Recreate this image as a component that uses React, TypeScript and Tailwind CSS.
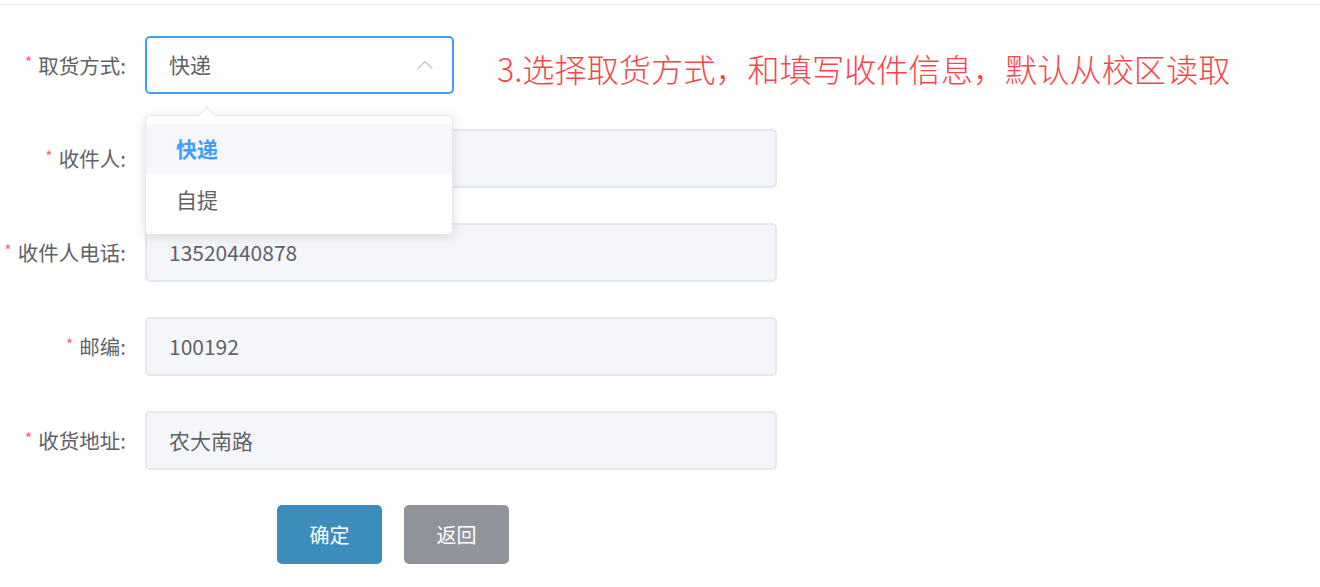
import { ChevronUp } from "lucide-react";

interface Field {
  label: string;
  value: string;
}

const fields: Field[] = [
  { label: "收件人", value: "" },
  { label: "收件人电话", value: "13520440878" },
  { label: "邮编", value: "100192" },
  { label: "收货地址", value: "农大南路" },
];

const font = { fontFamily: '"Noto Sans CJK SC", "Noto Sans", sans-serif' };

function Label({ text }: { text: string }) {
  return (
    <div className="w-[145px] shrink-0 pr-[19px] flex items-center justify-end text-[20.5px] text-[#606266] whitespace-nowrap">
      <span className="text-[#f56c6c] text-[16px] mr-[6px] -mt-[6px]">*</span>
      {text}:
    </div>
  );
}

export default function App() {
  return (
    <div className="w-[1320px] h-[587px] bg-white overflow-hidden" style={font}>
      <div className="h-[4px]" />
      <div className="border-t border-[#e6e8ef]" />

      <div className="pt-[31px]">
        {/* 取货方式 */}
        <div className="flex items-center h-[58px]">
          <Label text="取货方式" />
          <div className="relative">
            <div className="w-[309px] h-[58px] border-2 border-[#409eff] rounded-[5px] flex items-center justify-between pl-[22px] pr-[13px] text-[21px] text-[#606266]">
              <span>快递</span>
              <ChevronUp className="w-[28px] h-[28px] text-[#c0c4cc]" strokeWidth={1} />
            </div>

            {/* dropdown */}
            <div className="absolute left-0 top-[79px] z-10 w-[308px] bg-white border border-[#e4e7ed] rounded-[4px] shadow-[0_2px_12px_rgba(0,0,0,0.12)] py-[8px]">
              <div className="absolute -top-[7px] left-[55px] w-[12px] h-[12px] bg-white border-l border-t border-[#e4e7ed] rotate-45" />
              <div className="relative h-[50px] bg-[#f5f7fa] flex items-center pl-[30px] text-[21px] font-bold text-[#409eff]">
                快递
              </div>
              <div className="h-[52px] flex items-center pl-[30px] text-[21px] text-[#606266]">
                自提
              </div>
            </div>
          </div>
          <div
            className="ml-[43px] mt-[6px] text-[32.2px] leading-none text-[#f5464b] whitespace-nowrap"
            style={{ fontFamily: '"Noto Sans CJK SC", sans-serif', fontWeight: 300 }}
          >
            3.选择取货方式，和填写收件信息，默认从校区读取
          </div>
        </div>

        {fields.map((f) => (
          <div key={f.label} className="flex items-center h-[59px] mt-[35px]">
            <Label text={f.label} />
            <div className="w-[632px] h-[59px] bg-[#f5f6fa] border-2 border-[#e4e7ed] rounded-[5px] flex items-center pl-[22px] text-[21px] text-[#606266]">
              {f.value}
            </div>
          </div>
        ))}

        <div className="flex mt-[35px] pl-[277px] gap-[22px]">
          <button className="w-[105px] h-[59px] rounded-[5px] bg-[#3c8dbc] text-white text-[20px]">
            确定
          </button>
          <button className="w-[105px] h-[59px] rounded-[5px] bg-[#909399] text-white text-[20px]">
            返回
          </button>
        </div>
      </div>
    </div>
  );
}
